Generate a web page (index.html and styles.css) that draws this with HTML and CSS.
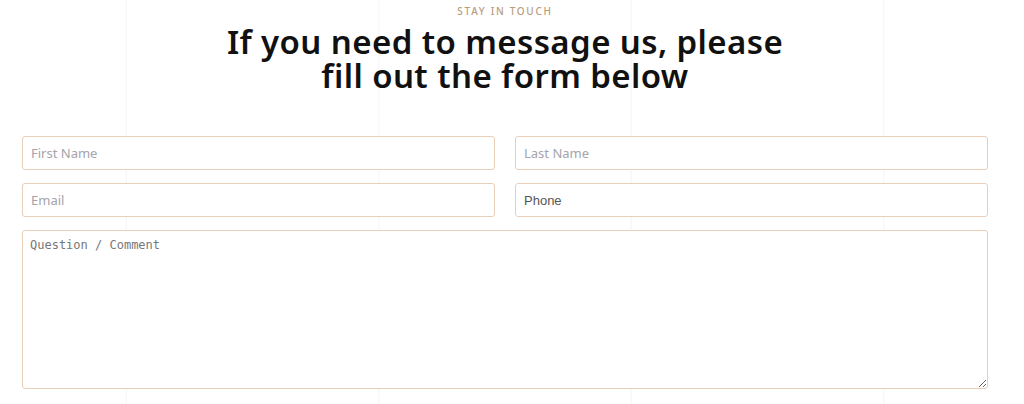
FILE: index.html
```html
<!DOCTYPE html>
<html lang="en">
<head>
<meta charset="utf-8">
<title>Stay in touch</title>
<link rel="stylesheet" href="styles.css">
</head>
<body>
<main class="page">
  <section class="contact">
    <p class="eyebrow">STAY IN TOUCH</p>
    <h1 class="title">If you need to message us, please<br>fill out the form below</h1>
    <form class="form">
      <div class="row">
        <input class="field" type="text" placeholder="First Name">
        <input class="field" type="text" placeholder="Last Name">
      </div>
      <div class="row">
        <input class="field" type="email" placeholder="Email">
        <input class="field field-phone" type="tel" placeholder="Phone">
      </div>
      <textarea class="comment" placeholder="Question / Comment"></textarea>
    </form>
  </section>
</main>
</body>
</html>
```
FILE: styles.css
```css
html, body {
  margin: 0;
  padding: 0;
  background: #fff;
}
.page {
  width: 1010px;
  min-height: 404px;
  background-image: linear-gradient(to right, transparent 126px, #f4f4f4 126px, #f4f4f4 127px, transparent 127px);
  background-size: 252.5px 100%;
  background-repeat: repeat-x;
}
.contact {
  padding: 0 22px;
  display: flex;
  flex-direction: column;
}
.eyebrow {
  margin: 6px 0 0;
  text-align: center;
  font-family: "Noto Sans", sans-serif;
  font-size: 10px;
  line-height: 11px;
  letter-spacing: 1.7px;
  font-weight: 500;
  color: #b89c7e;
}
.title {
  margin: 8px 0 0;
  text-align: center;
  font-family: "Noto Sans", sans-serif;
  font-weight: 600;
  font-size: 33px;
  line-height: 34px;
  letter-spacing: 0.4px;
  color: #111;
}
.form {
  margin-top: 43px;
  display: flex;
  flex-direction: column;
  gap: 13px;
}
.row {
  display: flex;
  gap: 20px;
}
.field {
  flex: 1;
  box-sizing: border-box;
  height: 34px;
  margin: 0;
  padding: 0 8px;
  border: 1px solid #e7cfb9;
  border-radius: 3px;
  background: #fff;
  font-family: "Noto Sans", sans-serif;
  font-size: 13px;
  color: #333;
}
.field::placeholder {
  color: #a4a4ac;
}
.field-phone {
  font-family: "Liberation Sans", Arial, sans-serif;
}
.field-phone::placeholder {
  color: #555;
}
.comment {
  box-sizing: border-box;
  width: 100%;
  height: 159px;
  margin: 0;
  padding: 7px 7px;
  border: 1px solid #e7cfb9;
  border-radius: 3px;
  background: #fff;
  font-family: "DejaVu Sans Mono", "Liberation Mono", monospace;
  font-size: 12px;
  color: #333;
  resize: vertical;
}
.comment::placeholder {
  color: #777;
}
```
